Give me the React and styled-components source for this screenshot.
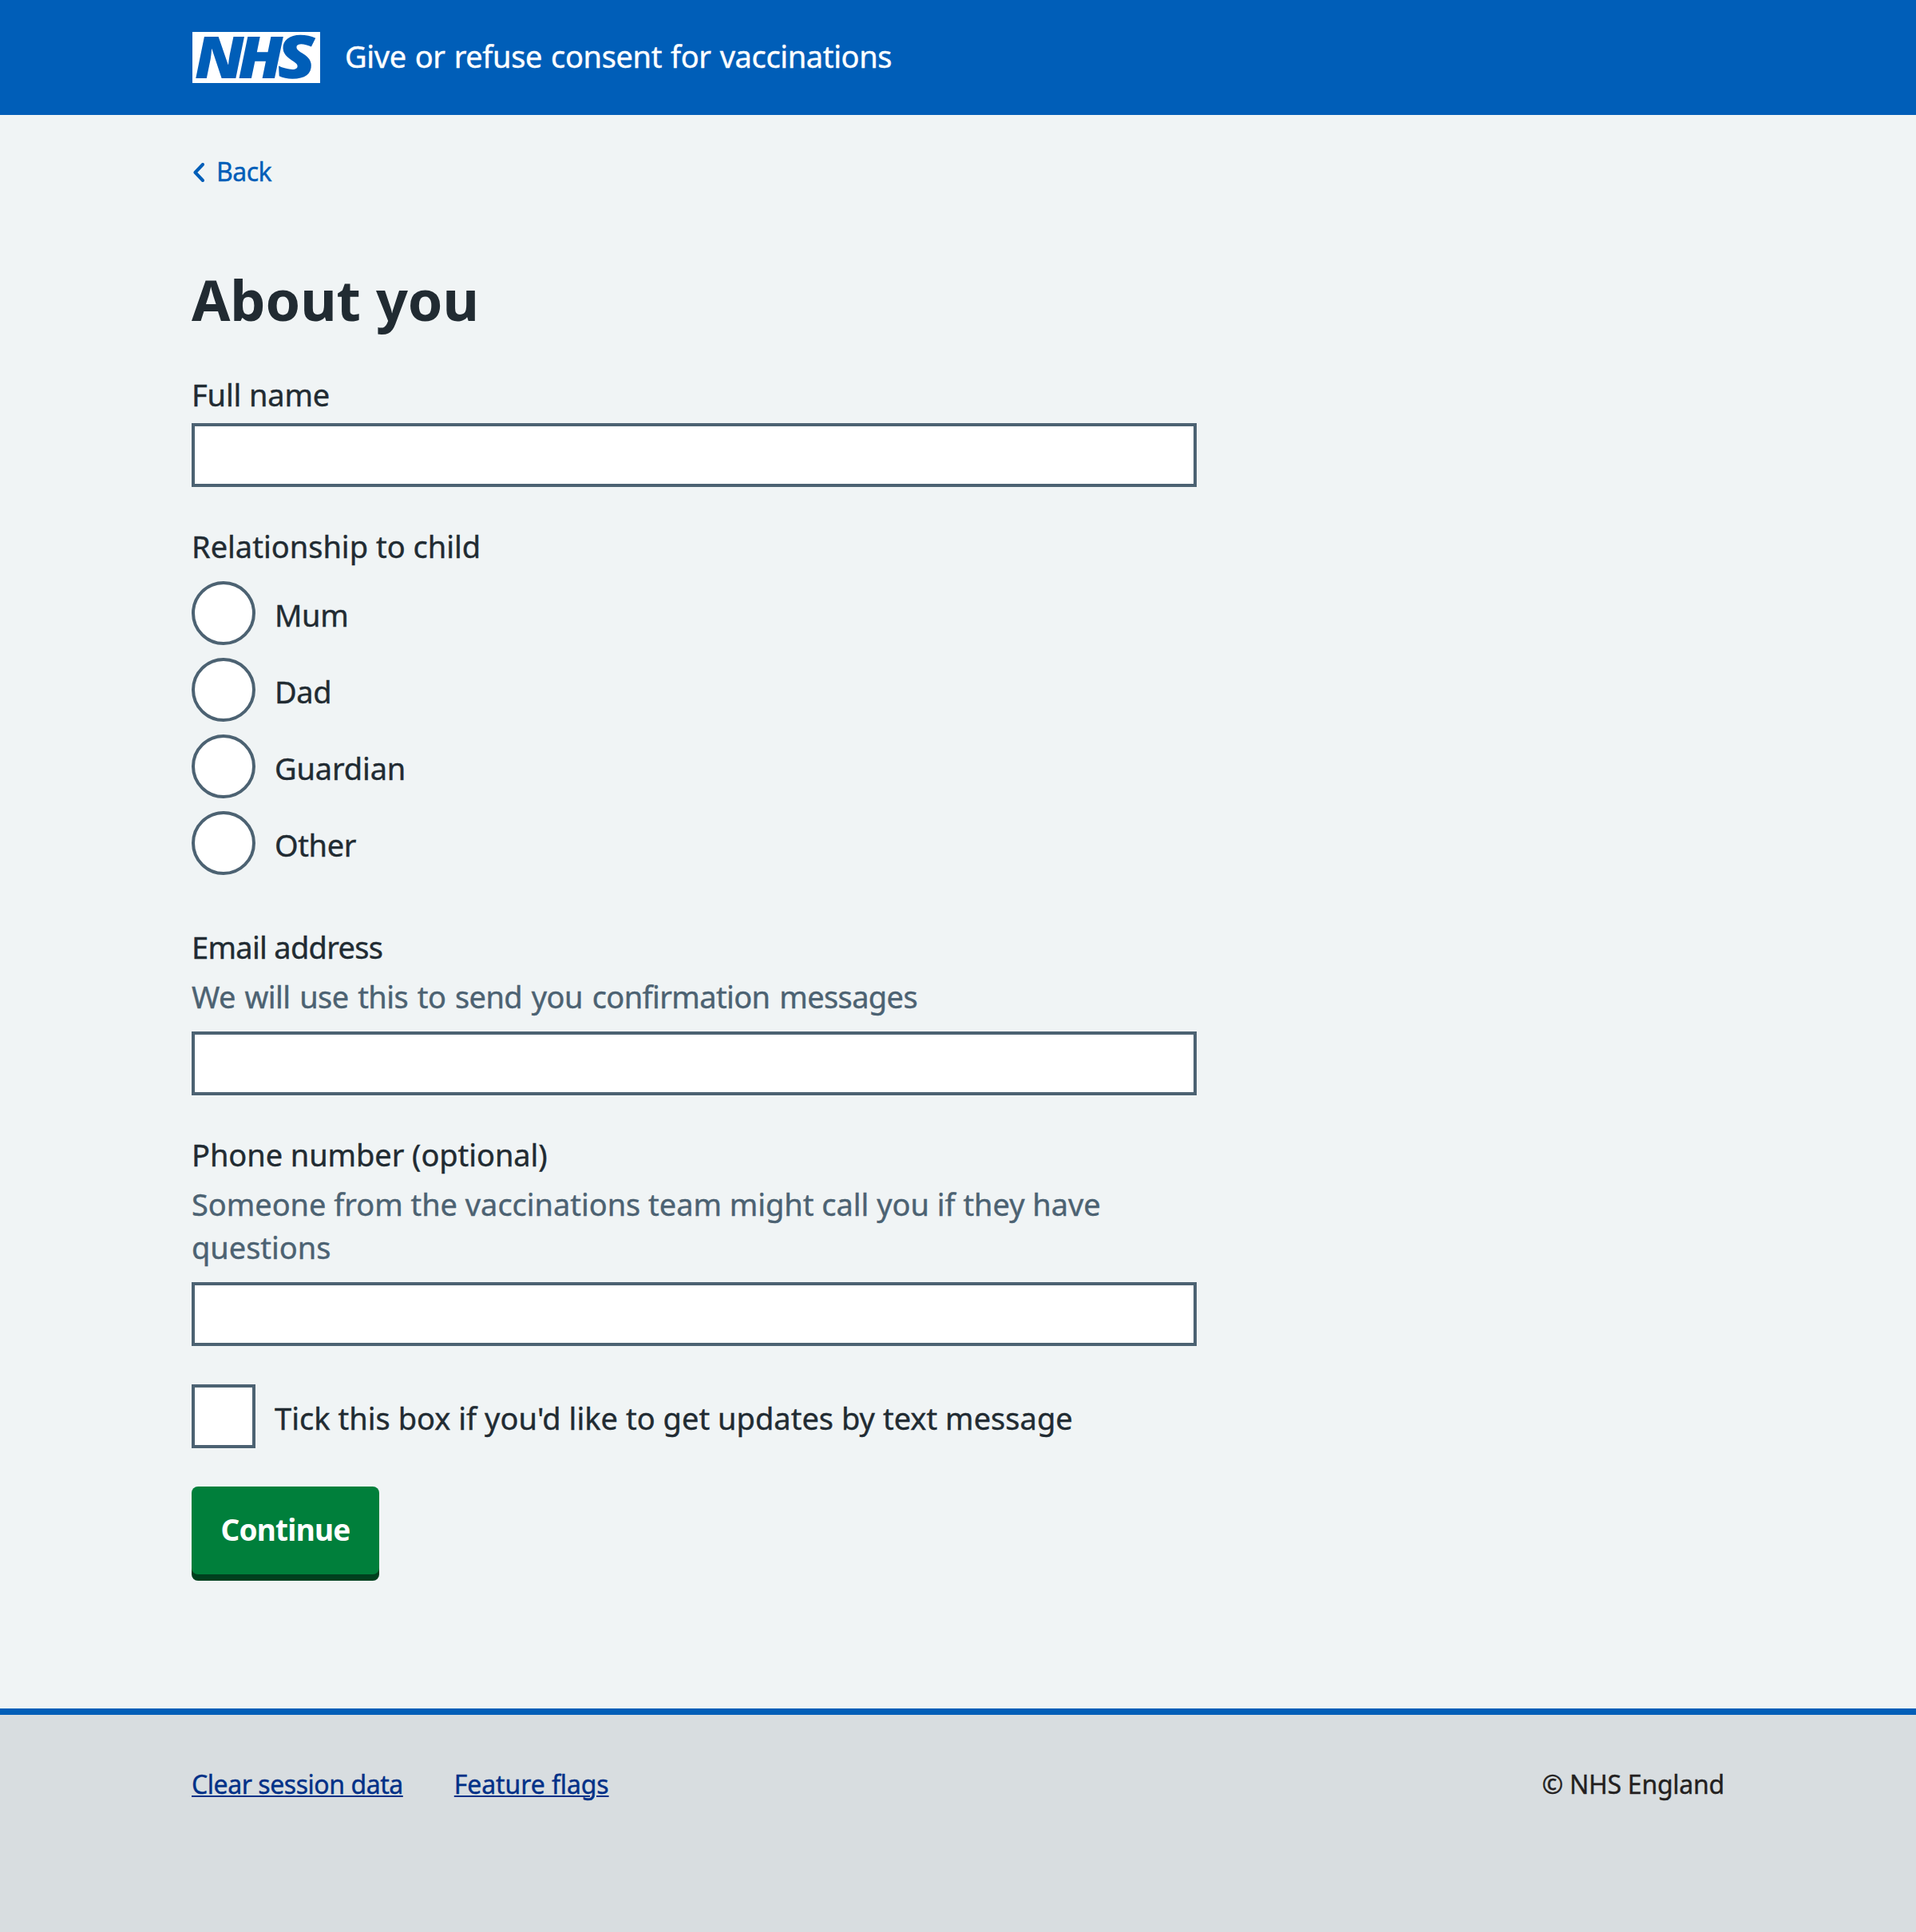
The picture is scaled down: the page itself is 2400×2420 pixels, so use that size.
import React from 'react';
import styled, { createGlobalStyle } from 'styled-components';

const blue = '#005eb8';
const ink = '#212b32';
const slate = '#4c6272';

const GlobalStyle = createGlobalStyle`
  *, *::before, *::after { box-sizing: border-box; }
  body {
    margin: 0;
    background: #f0f4f5;
    color: ${ink};
    font-family: "Noto Sans", "Open Sans", sans-serif;
    font-size: 38px;
    line-height: 54px;
    -webkit-text-stroke: 0.4px currentColor;
  }
`;

const Page = styled.div`
  display: flex;
  flex-direction: column;
  min-height: 2420px;
`;

const Header = styled.header`
  display: flex;
  align-items: flex-start;
  gap: 31px;
  height: 144px;
  padding: 40px 240px 0 241px;
  background: ${blue};
`;

const Logo = styled.svg`
  display: block;
  width: 160px;
  height: 64px;
  flex: none;
  overflow: visible;
  -webkit-text-stroke: 0;
`;

const LogoLetter = styled.text`
  font-family: "Open Sans", "Noto Sans", sans-serif;
  font-size: ${p => p.$size ?? 73}px;
  font-weight: 800;
  font-style: italic;
  fill: ${blue};
`;

const ServiceName = styled.span`
  margin-top: 3px;
  color: #fff;
  letter-spacing: -0.37px;
  word-spacing: 1.5px;
`;

const Main = styled.main`
  flex: 1;
  padding: 47px 240px 0;
`;

const BackLink = styled.a`
  display: flex;
  align-items: center;
  gap: 15px;
  width: max-content;
  padding-left: 2px;
  color: ${blue};
  font-size: 32px;
  line-height: 48px;
  letter-spacing: -0.5px;
`;

const Chevron = styled.svg`
  display: block;
  margin-top: 1px;
`;

const Heading = styled.h1`
  margin: 96px 0 52px;
  font-size: 70px;
  font-weight: 700;
  line-height: 80px;
  letter-spacing: -0.1px;
  word-spacing: 1px;
  -webkit-text-stroke: 0;
`;

const Form = styled.form`
  width: 1259px;
`;

const Field = styled.div`
  display: flex;
  flex-direction: column;
  margin-bottom: ${p => p.$after ?? 47}px;
`;

const Label = styled.label`
  letter-spacing: ${p => p.$tracking ?? 0}px;
`;

const Hint = styled.div`
  margin: 8px 0;
  color: ${slate};
  letter-spacing: ${p => p.$tracking ?? 0}px;
  word-spacing: ${p => p.$wordGap ?? 0}px;
`;

const Input = styled.input`
  width: 100%;
  height: 80px;
  margin-top: 9px;
  padding: 0 10px;
  border: 4px solid ${slate};
  border-radius: 0;
  background: #fff;
  font: inherit;
  outline: none;
`;

const Group = styled.fieldset`
  margin: 0 0 63px;
  padding: 0;
  border: 0;
  min-width: 0;
`;

const Legend = styled.legend`
  padding: 0;
  margin-bottom: 17px;
`;

const Options = styled.div`
  display: flex;
  flex-direction: column;
  gap: 16px;
`;

const Option = styled.label`
  display: flex;
  align-items: flex-start;
  gap: 24px;
  height: 80px;
  letter-spacing: ${p => p.$tracking ?? 0}px;
`;

const Control = styled.input`
  appearance: none;
  flex: none;
  width: 80px;
  height: 80px;
  margin: 0;
  border: 4px solid ${slate};
  border-radius: ${p => (p.type === 'radio' ? '50%' : '0')};
  background: #fff;
`;

const OptionText = styled.span`
  margin-top: 15px;
`;

const Button = styled.button`
  display: block;
  width: 235px;
  height: 110px;
  margin-top: 48px;
  padding: 27px 0 29px;
  border: 0;
  border-radius: 8px;
  background: #007f3b;
  box-shadow: 0 8px 0 #00401e;
  color: #fff;
  font-family: inherit;
  font-size: 37px;
  font-weight: 700;
  line-height: 54px;
  letter-spacing: -0.8px;
  -webkit-text-stroke: 0;
`;

const Footer = styled.footer`
  display: flex;
  justify-content: space-between;
  height: 280px;
  padding: 63px 240px 0;
  border-top: 8px solid ${blue};
  background: #d8dde0;
  font-size: 32px;
  line-height: 48px;
`;

const FooterLinks = styled.nav`
  display: flex;
  gap: 64px;
`;

const FooterLink = styled.a`
  color: #003087;
  letter-spacing: ${p => p.$tracking ?? 0}px;
  text-decoration: underline;
  text-decoration-thickness: 2px;
  text-underline-offset: 2px;
`;

const Copyright = styled.span`
  color: #231f20;
  letter-spacing: -0.25px;
`;

const relationships = [
  { name: 'Mum', tracking: -0.4 },
  { name: 'Dad', tracking: -0.4 },
  { name: 'Guardian', tracking: -0.15 },
  { name: 'Other', tracking: -0.4 },
];

export default function App() {
  return (
    <Page>
      <GlobalStyle />
      <Header>
        <Logo viewBox="0 0 160 64" role="img" aria-label="NHS">
          <rect width="160" height="64" fill="#fff" />
          <LogoLetter transform="translate(3 58) skewX(1.5)" textLength="63" lengthAdjust="spacingAndGlyphs">N</LogoLetter>
          <LogoLetter transform="translate(57.3 58) skewX(1.5)" textLength="57.5" lengthAdjust="spacingAndGlyphs">H</LogoLetter>
          <LogoLetter $size={75} transform="translate(107 58.3) skewX(3)" textLength="49" lengthAdjust="spacingAndGlyphs">S</LogoLetter>
        </Logo>
        <ServiceName>Give or refuse consent for vaccinations</ServiceName>
      </Header>
      <Main>
        <BackLink>
          <Chevron width="14" height="24" viewBox="0 0 14 24" fill="none">
            <path d="M12 2 2.5 12 12 22" stroke={blue} strokeWidth="4" strokeLinecap="round" strokeLinejoin="round" />
          </Chevron>
          Back
        </BackLink>
        <Heading>About you</Heading>
        <Form>
          <Field>
            <Label htmlFor="name" $tracking={-0.15}>Full name</Label>
            <Input id="name" />
          </Field>
          <Group>
            <Legend>Relationship to child</Legend>
            <Options>
              {relationships.map(r => (
                <Option key={r.name} $tracking={r.tracking}>
                  <Control type="radio" name="relationship" />
                  <OptionText>{r.name}</OptionText>
                </Option>
              ))}
            </Options>
          </Group>
          <Field>
            <Label htmlFor="email" $tracking={-0.7}>Email address</Label>
            <Hint $tracking={-0.61} $wordGap={2.5}>We will use this to send you confirmation messages</Hint>
            <Input id="email" />
          </Field>
          <Field $after={48}>
            <Label htmlFor="phone" $tracking={-0.08}>Phone number (optional)</Label>
            <Hint $tracking={-0.04}>Someone from the vaccinations team might call you if they have questions</Hint>
            <Input id="phone" />
          </Field>
          <Option $tracking={0.02}>
            <Control type="checkbox" />
            <OptionText>Tick this box if you'd like to get updates by text message</OptionText>
          </Option>
          <Button type="button">Continue</Button>
        </Form>
      </Main>
      <Footer>
        <FooterLinks>
          <FooterLink $tracking={-0.45}>Clear session data</FooterLink>
          <FooterLink $tracking={-0.1}>Feature flags</FooterLink>
        </FooterLinks>
        <Copyright>© NHS England</Copyright>
      </Footer>
    </Page>
  );
}
